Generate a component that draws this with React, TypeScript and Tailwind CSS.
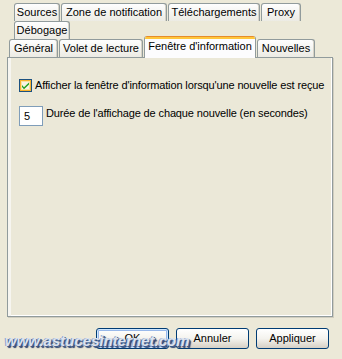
import React from "react";

const font = { fontFamily: "'Liberation Sans', Arial, sans-serif" };

function Tab({ label, w }: { label: string; w: number }) {
  return (
    <div
      className="h-[18px] shrink-0 border border-b-0 border-[#919B9C] rounded-t-[3px] bg-gradient-to-b from-[#FEFEFE] to-[#ECEBE4] flex items-center justify-center text-[11px] leading-none text-black mr-[1px] whitespace-nowrap shadow-[inset_-1px_0_0_#D6D3C6]"
      style={{ width: w }}
    >
      {label}
    </div>
  );
}

export default function App() {
  return (
    <div
      className="relative w-[342px] h-[359px] bg-[#ECE9D8] overflow-hidden select-none"
      style={font}
    >
      {/* Tab rows */}
      <div className="pt-[3px]">
        <div className="flex pl-[14px]">
          <Tab label="Sources" w={46} />
          <Tab label="Zone de notification" w={106} />
          <Tab label="Téléchargements" w={92} />
          <Tab label="Proxy" w={40} />
        </div>
        <div className="flex pl-[14px]">
          <Tab label="Débogage" w={56} />
        </div>
        <div className="flex pl-[9px] h-[18px] items-start">
          <Tab label="Général" w={49} />
          <Tab label="Volet de lecture" w={84} />
          <div className="relative z-10 -mt-[3px] h-[22px] w-[112px] shrink-0 mr-[1px] border-x border-[#919B9C] rounded-t-[3px] bg-[#FCFCFE] overflow-hidden">
            <div className="h-[1px] bg-[#E68B2C]" />
            <div className="h-[2px] bg-[#FFC73C]" />
            <div className="flex items-center justify-center h-[15px] text-[11px] leading-none text-black whitespace-nowrap">
              Fenêtre d'information
            </div>
          </div>
          <Tab label="Nouvelles" w={58} />
        </div>
      </div>

      {/* Panel */}
      <div className="ml-[7px] w-[326px] h-[260px] border border-[#919B9C] bg-[#EBE8D8] shadow-[inset_3px_0_0_#F6F5F0,inset_-1px_-1px_0_#FFFFFF,1px_1px_0_#D0CDBF] pl-[11px] pt-[21px] text-[11px] leading-none text-black whitespace-nowrap tracking-[-0.13px]">
        <div className="flex items-center h-[13px]">
          <svg width="13" height="13" viewBox="0 0 13 13" className="shrink-0">
            <rect x="0.5" y="0.5" width="12" height="12" fill="#F8F4E4" stroke="#1C5180" />
            <rect x="1.5" y="1.5" width="10" height="10" fill="none" stroke="#F8B330" />
            <rect x="2.5" y="2.5" width="8" height="8" fill="none" stroke="#FCE3A0" />
            <path d="M3 6 L5 8.3 L10 3.5 L10 5.5 L5 10.3 L3 8 Z" fill="#21A121" />
          </svg>
          <span className="ml-[3px]">Afficher la fenêtre d'information lorsqu'une nouvelle est reçue</span>
        </div>
        <div className="flex items-start mt-[14px]">
          <div className="w-[24px] h-[20px] border border-[#7F9DB9] bg-white flex items-center pl-[4px] text-[11px] shrink-0">
            5
          </div>
          <span className="ml-[3px] mt-[2px]">Durée de l'affichage de chaque nouvelle (en secondes)</span>
        </div>
      </div>

      {/* Buttons */}
      <div className="flex justify-end gap-[7px] pr-[13px] mt-[11px]">
        {["OK", "Annuler", "Appliquer"].map((b, i) => (
          <div
            key={b}
            className={
              "w-[73px] h-[21px] rounded-[3px] border border-[#003C74] bg-gradient-to-b from-[#FFFFFF] via-[#F4F3EE] to-[#D6D0C5] flex items-center justify-center text-[11px] text-black " +
              (i === 0 ? "shadow-[inset_0_0_0_1px_#CEE7FF,inset_0_0_0_2px_#98B8EA]" : "")
            }
          >
            {b}
          </div>
        ))}
      </div>

      {/* Watermark */}
      <div
        className="absolute left-[5px] top-[332px] text-[15px] leading-[18px] font-bold italic text-[#DCE3EF] [text-shadow:1px_1px_0_#3E5A8C,-1px_0_0_#8CA0C4,2px_2px_1px_#2B3F6A] whitespace-nowrap"
        style={{ fontFamily: "'Liberation Sans', Arial, sans-serif" }}
      >
        www.astucesinternet.com
      </div>
    </div>
  );
}
